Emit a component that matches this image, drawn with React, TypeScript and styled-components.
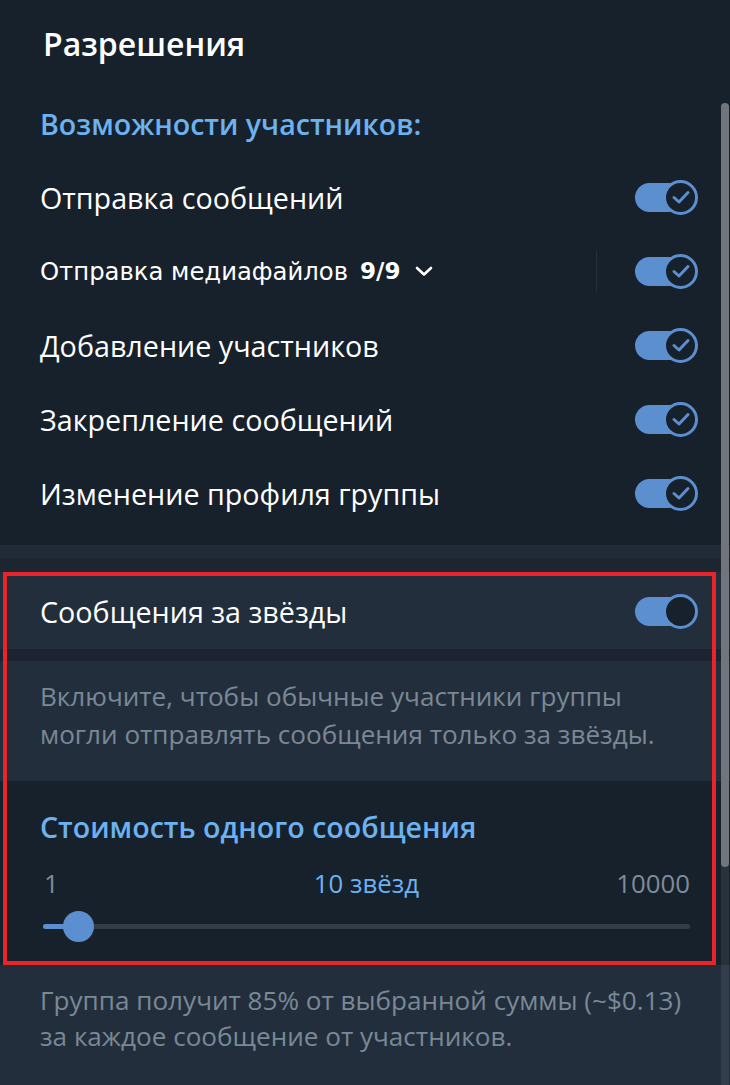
import React from "react";
import styled, { createGlobalStyle } from "styled-components";

const Global = createGlobalStyle`
  html, body { margin: 0; padding: 0; background: #17212b; }
  body { font-family: "Open Sans", "Noto Sans", sans-serif; color: #fff; width: 730px; height: 1085px; overflow: hidden; }
  * { box-sizing: border-box; }
`;

const Page = styled.div`
  position: relative;
  width: 730px;
  height: 1085px;
  display: flex;
  flex-direction: column;
  background: #17212b;
`;

const Title = styled.h1`
  margin: 0;
  padding: 23px 0 0 43px;
  height: 86px;
  font-size: 32px;
  font-weight: 600;
  line-height: 42px;
  color: #fff;
`;

const Section = styled.section<{ $light?: boolean }>`
  background: ${(p) => (p.$light ? "#232e3c" : "#17212b")};
  display: flex;
  flex-direction: column;
`;

const SectionHeader = styled.div`
  padding: 0 40px;
  height: 74px;
  display: flex;
  align-items: center;
  font-size: 28.6px;
  font-weight: 600;
  color: #6cb2f1;
`;

const Row = styled.div`
  height: 74px;
  display: flex;
  align-items: center;
  padding: 0 33px 0 40px;
  gap: 12px;
`;

const Label = styled.span`
  flex: 1;
  font-size: 28.7px;
  color: #fff;
  white-space: nowrap;
`;

const MediaLabel = styled.span`
  flex: 1;
  display: flex;
  align-items: center;
  font-family: "DejaVu Sans", sans-serif;
  font-size: 24.3px;
  color: #fff;
  white-space: nowrap;
`;

const Count = styled.b`
  margin-left: 12px;
  font-weight: 700;
  font-size: 23px;
`;

const Chevron = styled.svg`
  margin-left: 14px;
  width: 20px;
  height: 12px;
`;

const VDivider = styled.div`
  width: 1px;
  height: 40px;
  background: #26313d;
  margin-right: 26px;
`;

const Track = styled.div`
  position: relative;
  width: 62px;
  height: 29px;
  border-radius: 15px;
  background: #5b8fcf;
  flex-shrink: 0;
`;

const Knob = styled.div`
  position: absolute;
  right: -1px;
  top: 50%;
  width: 35px;
  height: 35px;
  margin-top: -17.5px;
  border-radius: 50%;
  background: #17212b;
  border: 3px solid #5b8fcf;
  display: flex;
  align-items: center;
  justify-content: center;
`;

const Toggle = ({ checked }: { checked?: boolean }) => (
  <Track>
    <Knob>
      {checked && (
        <svg width="20" height="16" viewBox="0 0 20 16">
          <path d="M3 8.5 L8 13 L17 3.5" fill="none" stroke="#5b8fcf" strokeWidth="3" strokeLinecap="round" strokeLinejoin="round" />
        </svg>
      )}
    </Knob>
  </Track>
);

const Band = styled.div<{ $h: number; $c: string }>`
  height: ${(p) => p.$h}px;
  background: ${(p) => p.$c};
`;

const Highlight = styled.div`
  position: relative;
  display: flex;
  flex-direction: column;
  &::after {
    content: "";
    position: absolute;
    left: 3px;
    right: 14px;
    top: 0;
    bottom: 0;
    border: 4px solid #e8242c;
    pointer-events: none;
  }
`;

const ToggleRow = styled(Row)`
  height: 77px;
  background: #232e3c;
  padding-top: 2px;
`;

const Hint = styled.p`
  margin: 0;
  padding: 16px 40px 0 40px;
  font-size: 26.1px;
  line-height: 38px;
  color: #7a8896;
  white-space: nowrap;
`;

const PriceSection = styled.div`
  background: #17212b;
  height: 184px;
  display: flex;
  flex-direction: column;
  padding: 0 40px 0 43px;
`;

const PriceHeader = styled.div`
  height: 90px;
  display: flex;
  align-items: center;
  margin-left: -3px;
  font-size: 28.6px;
  font-weight: 600;
  color: #6cb2f1;
`;

const Scale = styled.div`
  display: grid;
  grid-template-columns: 1fr auto 1fr;
  align-items: center;
  height: 24px;
  line-height: 24px;
  font-size: 25.8px;
  color: #7f8c99;
`;

const ScaleValue = styled.span`
  color: #6cb2f1;
`;

const ScaleEdge = styled.span<{ $end?: boolean }>`
  padding-left: ${(p) => (p.$end ? 0 : 1)}px;
  text-align: ${(p) => (p.$end ? "right" : "left")};
`;

const SliderWrap = styled.div`
  margin-top: 16px;
  position: relative;
  height: 30px;
  display: flex;
  align-items: center;
`;

const SliderTrack = styled.div`
  position: relative;
  width: 100%;
  height: 5px;
  border-radius: 3px;
  background: #323d4a;
`;

const SliderFill = styled.div`
  position: absolute;
  left: 0;
  top: 0;
  bottom: 0;
  border-radius: 3px;
  background: #5b8fcf;
`;

const Thumb = styled.div`
  position: absolute;
  top: 50%;
  width: 31px;
  height: 31px;
  margin: -15.5px 0 0 -15.5px;
  border-radius: 50%;
  background: #5b8fcf;
`;

const Footer = styled(Hint)`
  flex: 1;
  background: #232e3c;
  padding-top: 17px;
  line-height: 36px;
`;

const ScrollTrack = styled.div`
  position: absolute;
  right: 1px;
  top: 103px;
  bottom: 0;
  width: 8px;
  background: rgba(255, 255, 255, 0.08);
  border-radius: 4px 4px 0 0;
`;

const ScrollThumb = styled.div`
  height: 764px;
  border-radius: 4px;
  background: #71767c;
`;

const perms = [
  "Отправка сообщений",
  "media",
  "Добавление участников",
  "Закрепление сообщений",
  "Изменение профиля группы",
];

export default function App() {
  const fraction = 35 / 647;
  return (
    <>
      <Global />
      <Page>
        <Title>Разрешения</Title>
        <Section>
          <SectionHeader>Возможности участников:</SectionHeader>
          {perms.map((p) =>
            p === "media" ? (
              <Row key={p}>
                <MediaLabel>
                  Отправка медиафайлов
                  <Count>9/9</Count>
                  <Chevron viewBox="0 0 20 12">
                    <path d="M3 3 L10 9.5 L17 3" fill="none" stroke="#fff" strokeWidth="2.6" strokeLinecap="round" strokeLinejoin="round" />
                  </Chevron>
                </MediaLabel>
                <VDivider />
                <Toggle checked />
              </Row>
            ) : (
              <Row key={p}>
                <Label>{p}</Label>
                <Toggle checked />
              </Row>
            )
          )}
          <Band $h={15} $c="#17212b" />
        </Section>
        <Band $h={13} $c="#212b37" />
        <Band $h={14} $c="#1c2530" />
        <Highlight>
          <ToggleRow>
            <Label>Сообщения за звёзды</Label>
            <Toggle />
          </ToggleRow>
          <Band $h={12} $c="#1b2430" />
          <Section $light>
            <Hint>
              Включите, чтобы обычные участники группы
              <br />
              могли отправлять сообщения только за звёзды.
            </Hint>
            <Band $h={28} $c="#232e3c" />
          </Section>
          <PriceSection>
            <PriceHeader>Стоимость одного сообщения</PriceHeader>
            <Scale>
              <ScaleEdge>1</ScaleEdge>
              <ScaleValue>10 звёзд</ScaleValue>
              <ScaleEdge $end>10000</ScaleEdge>
            </Scale>
            <SliderWrap>
              <SliderTrack>
                <SliderFill style={{ width: `${fraction * 100}%` }} />
                <Thumb style={{ left: `${fraction * 100}%` }} />
              </SliderTrack>
            </SliderWrap>
          </PriceSection>
        </Highlight>
        <Footer>
          Группа получит 85% от выбранной суммы (~$0.13)
          <br />
          за каждое сообщение от участников.
        </Footer>
        <ScrollTrack>
          <ScrollThumb />
        </ScrollTrack>
      </Page>
    </>
  );
}
